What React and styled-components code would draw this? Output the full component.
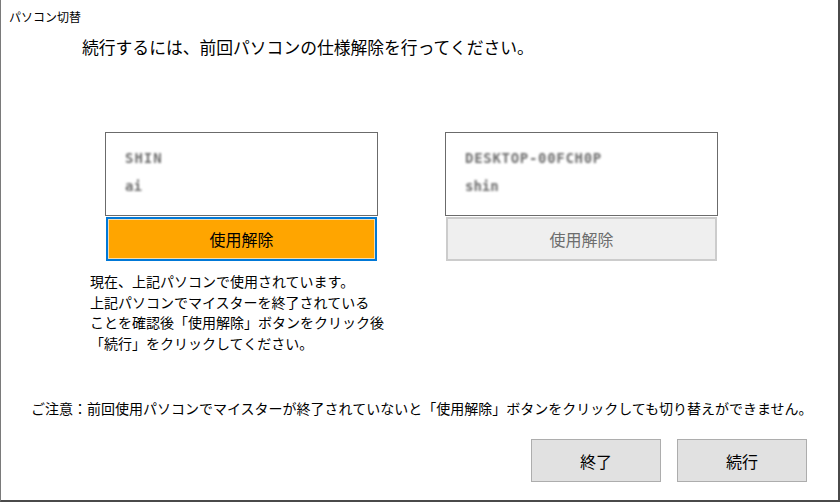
import React from 'react';
import styled, { createGlobalStyle } from 'styled-components';

const GlobalStyle = createGlobalStyle`
    html, body {
        margin:0;
        padding:0;
        background:#fff;
    }
    body {
        font-family:"Noto Sans CJK JP", "Noto Sans", sans-serif;
        color:#000;
    }
`;

const Window = styled.div`
    width:840px;
    height:502px;
    box-sizing:border-box;
    border-left:1px solid #7a7a7a;
    border-right:2px solid #4a4a4a;
    border-bottom:2px solid #4a4a4a;
    background:#fff;
    display:flex;
    flex-direction:column;
`;

const TitleBar = styled.div`
    height:32px;
    display:flex;
    align-items:center;
    padding-left:8px;
    font-size:12px;
    color:#000;
`;

const Heading = styled.div`
    margin-top:5px;
    padding-left:81px;
    font-size:16.8px;
    line-height:20px;
`;

const CardRow = styled.div`
    margin-top:75px;
    padding-left:104px;
    display:flex;
    gap:67px;
`;

const Column = styled.div`
    width:273px;
    display:flex;
    flex-direction:column;
    gap:1px;
`;

const Card = styled.div`
    height:84px;
    box-sizing:border-box;
    border:1px solid #6b6b6b;
    padding:17px 0 0 19px;
    display:flex;
    flex-direction:column;
    gap:12px;
`;

const Blurred = styled.div`
    font-family:"DejaVu Sans Mono", monospace;
    font-size:14px;
    line-height:16px;
    font-weight:bold;
    color:#6e6e6e;
    filter:blur(1.1px);
    letter-spacing:${p => p.$spacing || 0}px;
`;

const ReleaseButton = styled.button`
    margin:0 1px;
    height:44px;
    box-sizing:border-box;
    font-family:inherit;
    font-size:16px;
    padding:0;
    border:2px solid ${p => (p.$active ? '#0078d7' : '#cccccc')};
    background:${p => (p.$active ? '#ffa500' : '#efefef')};
    color:${p => (p.$active ? '#000' : '#6d6d6d')};
    box-shadow:${p => (p.$active ? 'inset 0 0 0 1px #f4dcae' : 'none')};
`;

const Instructions = styled.div`
    margin-top:10px;
    padding-left:89px;
    font-size:14px;
    line-height:20.5px;
`;

const Notice = styled.div`
    margin-top:45px;
    padding-left:30px;
    font-size:14px;
    line-height:20px;
    white-space:nowrap;
`;

const Footer = styled.div`
    margin-top:21px;
    padding-right:31px;
    display:flex;
    justify-content:flex-end;
    gap:16px;
`;

const FooterButton = styled.button`
    width:130px;
    height:43px;
    box-sizing:border-box;
    border:1px solid #adadad;
    background:#e1e1e1;
    font-family:inherit;
    font-size:16px;
    color:#000;
    padding:0;
`;

const App = () => {
    return (
        <>
            <GlobalStyle />
            <Window>
                <TitleBar>パソコン切替</TitleBar>
                <Heading>続行するには、前回パソコンの仕様解除を行ってください。</Heading>
                <CardRow>
                    <Column>
                        <Card>
                            <Blurred $spacing={1}>SHIN</Blurred>
                            <Blurred>ai</Blurred>
                        </Card>
                        <ReleaseButton $active>使用解除</ReleaseButton>
                    </Column>
                    <Column>
                        <Card>
                            <Blurred $spacing={0.7}>DESKTOP-00FCH0P</Blurred>
                            <Blurred>shin</Blurred>
                        </Card>
                        <ReleaseButton>使用解除</ReleaseButton>
                    </Column>
                </CardRow>
                <Instructions>
                    現在、上記パソコンで使用されています。<br />
                    上記パソコンでマイスターを終了されている<br />
                    ことを確認後「使用解除」ボタンをクリック後<br />
                    「続行」をクリックしてください。
                </Instructions>
                <Notice>
                    ご注意：前回使用パソコンでマイスターが終了されていないと「使用解除」ボタンをクリックしても切り替えができません。
                </Notice>
                <Footer>
                    <FooterButton>終了</FooterButton>
                    <FooterButton>続行</FooterButton>
                </Footer>
            </Window>
        </>
    );
};

export default App;
